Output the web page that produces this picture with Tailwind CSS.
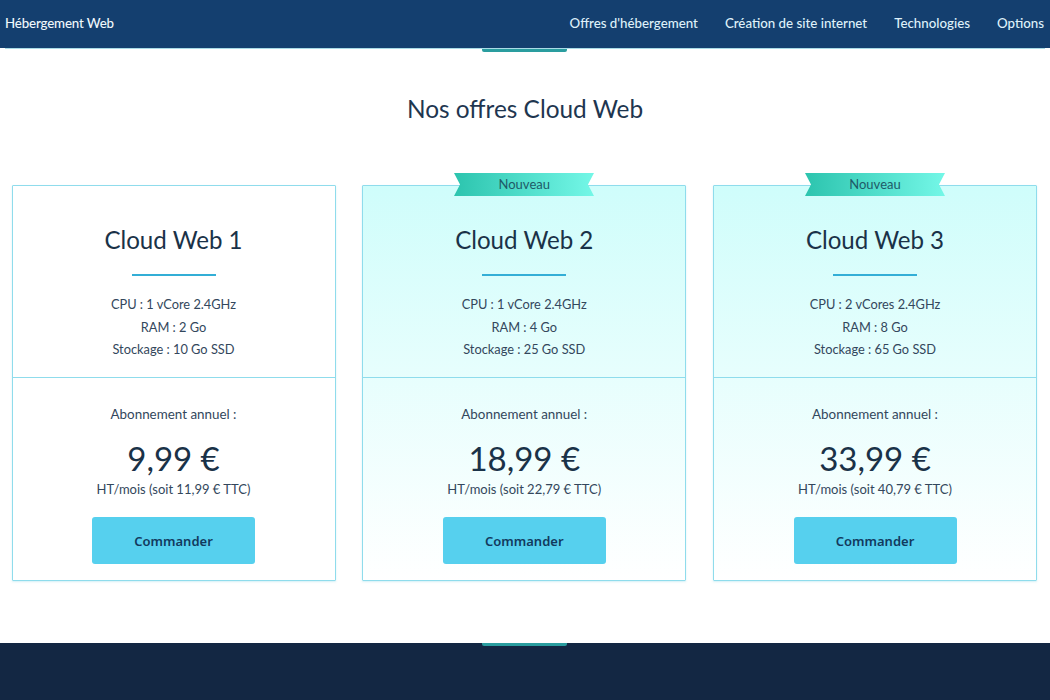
<!DOCTYPE html>
<html lang="fr">
<head>
    <meta charset="UTF-8">
    <title>Nos offres Cloud Web</title>
    <script src="https://cdn.jsdelivr.net/npm/@tailwindcss/browser@4"></script>
</head>
<body class="w-[1050px] h-[700px] overflow-hidden bg-white font-['Lato','Noto_Sans',sans-serif] text-[#1a3248]">
    <!-- Header -->
    <header class="h-[48px] bg-[#143f6f] flex items-center justify-between pl-[5px] pr-[6px] text-[13.3px] text-[#dff1fa] font-medium">
        <a href="#" class="text-[#f0f8fc] tracking-[-0.15px]">Hébergement Web</a>
        <nav class="flex gap-[27px]">
            <a href="#">Offres d'hébergement</a>
            <a href="#">Création de site internet</a>
            <a href="#">Technologies</a>
            <a href="#">Options</a>
        </nav>
    </header>
    <div class="h-[1px] bg-[#a9dbe6] mx-[5px]"></div>
    <div class="h-[3px] w-[85px] ml-[482px] bg-[#2a9d9f] rounded-b-[2px]"></div>

    <!-- Offers -->
    <main class="h-[591px] pt-[42px]">
        <h1 class="text-[24.4px] leading-[30px] text-center text-[#1e3650]">Nos offres Cloud Web</h1>
        <div class="mt-[61px] pl-[11.5px] flex gap-[26.75px]">

            <article class="relative w-[324px] h-[396px] border border-[#8fdcec] rounded-[1px] bg-white text-center shadow-[0_1px_2px_rgba(90,200,225,0.25)]">
                <div class="h-[192px] pt-[39px] border-b border-[#8fdcec]">
                    <h2 class="text-[24.1px] leading-[30px]">Cloud Web 1</h2>
                    <div class="w-[84px] h-[2px] mx-auto mt-[19px] mb-[17px] bg-[#33aed6]"></div>
                    <p class="text-[12.8px] leading-[22.5px] text-[#33475c]">CPU : 1 vCore 2.4GHz<br>RAM : 2 Go<br>Stockage : 10 Go SSD</p>
                </div>
                <div class="pt-[26px]">
                    <p class="text-[13.4px] leading-[20px] text-[#33475c]">Abonnement annuel :</p>
                    <p class="mt-[12px] text-[33px] leading-[44px]">9,99 €</p>
                    <p class="text-[13px] leading-[18px] text-[#33475c]">HT/mois (soit 11,99 € TTC)</p>
                    <button class="block w-[163px] h-[47px] pt-[2px] mx-auto mt-[19px] rounded-[3px] bg-[#56d0ee] font-['Noto_Sans',sans-serif] text-[13px] font-semibold text-[#123a5e]">Commander</button>
                </div>
            </article>

            <article class="relative w-[324px] h-[396px] border border-[#8fdcec] rounded-[1px] bg-linear-to-b from-[#cffdfb] to-white text-center shadow-[0_1px_2px_rgba(90,200,225,0.25)]">
                <div class="absolute left-[91px] top-[-13px] w-[140px] h-[23px]">
                    <svg class="absolute inset-0" width="140" height="23" viewBox="0 0 140 23">
                        <defs><linearGradient id="rib2"><stop offset="0" stop-color="#2cc4ae"/><stop offset="1" stop-color="#74f7e7"/></linearGradient></defs>
                        <polygon points="0,0 140,0 134,11.5 140,23 0,23 6,11.5" fill="url(#rib2)"/>
                    </svg>
                    <span class="relative block text-[13px] leading-[23px] text-[#1f5a68]">Nouveau</span>
                </div>
                <div class="h-[192px] pt-[39px] border-b border-[#8fdcec]">
                    <h2 class="text-[24.1px] leading-[30px]">Cloud Web 2</h2>
                    <div class="w-[84px] h-[2px] mx-auto mt-[19px] mb-[17px] bg-[#33aed6]"></div>
                    <p class="text-[12.8px] leading-[22.5px] text-[#33475c]">CPU : 1 vCore 2.4GHz<br>RAM : 4 Go<br>Stockage : 25 Go SSD</p>
                </div>
                <div class="pt-[26px]">
                    <p class="text-[13.4px] leading-[20px] text-[#33475c]">Abonnement annuel :</p>
                    <p class="mt-[12px] text-[33px] leading-[44px]">18,99 €</p>
                    <p class="text-[13px] leading-[18px] text-[#33475c]">HT/mois (soit 22,79 € TTC)</p>
                    <button class="block w-[163px] h-[47px] pt-[2px] mx-auto mt-[19px] rounded-[3px] bg-[#56d0ee] font-['Noto_Sans',sans-serif] text-[13px] font-semibold text-[#123a5e]">Commander</button>
                </div>
            </article>

            <article class="relative w-[324px] h-[396px] border border-[#8fdcec] rounded-[1px] bg-linear-to-b from-[#cffdfb] to-white text-center shadow-[0_1px_2px_rgba(90,200,225,0.25)]">
                <div class="absolute left-[91px] top-[-13px] w-[140px] h-[23px]">
                    <svg class="absolute inset-0" width="140" height="23" viewBox="0 0 140 23">
                        <defs><linearGradient id="rib3"><stop offset="0" stop-color="#2cc4ae"/><stop offset="1" stop-color="#74f7e7"/></linearGradient></defs>
                        <polygon points="0,0 140,0 134,11.5 140,23 0,23 6,11.5" fill="url(#rib3)"/>
                    </svg>
                    <span class="relative block text-[13px] leading-[23px] text-[#1f5a68]">Nouveau</span>
                </div>
                <div class="h-[192px] pt-[39px] border-b border-[#8fdcec]">
                    <h2 class="text-[24.1px] leading-[30px]">Cloud Web 3</h2>
                    <div class="w-[84px] h-[2px] mx-auto mt-[19px] mb-[17px] bg-[#33aed6]"></div>
                    <p class="text-[12.8px] leading-[22.5px] text-[#33475c]">CPU : 2 vCores 2.4GHz<br>RAM : 8 Go<br>Stockage : 65 Go SSD</p>
                </div>
                <div class="pt-[26px]">
                    <p class="text-[13.4px] leading-[20px] text-[#33475c]">Abonnement annuel :</p>
                    <p class="mt-[12px] text-[33px] leading-[44px]">33,99 €</p>
                    <p class="text-[13px] leading-[18px] text-[#33475c]">HT/mois (soit 40,79 € TTC)</p>
                    <button class="block w-[163px] h-[47px] pt-[2px] mx-auto mt-[19px] rounded-[3px] bg-[#56d0ee] font-['Noto_Sans',sans-serif] text-[13px] font-semibold text-[#123a5e]">Commander</button>
                </div>
            </article>

        </div>
    </main>

    <!-- Footer -->
    <footer class="h-[57px] bg-[#132743]">
        <div class="h-[3px] w-[85px] ml-[482px] bg-[#2a9d9f] rounded-b-[2px]"></div>
    </footer>
</body>
</html>
